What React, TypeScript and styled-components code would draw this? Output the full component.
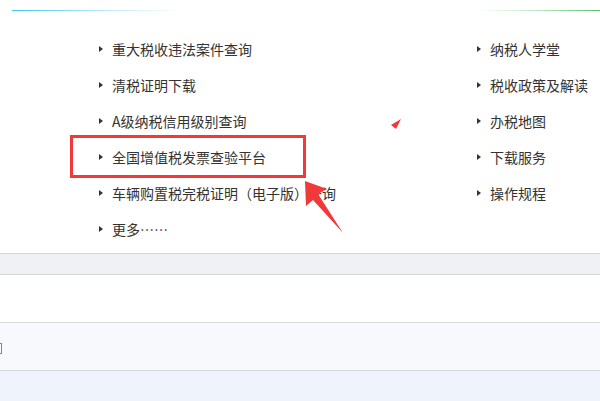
import React from 'react'
import styled, { createGlobalStyle } from 'styled-components'

const Global = createGlobalStyle`
  html, body {
    margin: 0;
    padding: 0;
    background: #fff;
  }
  body {
    font-family: "Microsoft YaHei", "Noto Sans CJK SC", "Noto Sans", sans-serif;
    overflow: hidden;
  }
`

const Page = styled.div`
  width: 600px;
  height: 401px;
  display: flex;
  flex-direction: column;
  background: #fff;
`

const Rules = styled.div`
  display: flex;
  justify-content: space-between;
  padding-top: 10px;
`

const Rule = styled.i<{ $side: 'left' | 'right' }>`
  display: block;
  height: 1px;
  width: ${p => (p.$side === 'left' ? '171px' : '125px')};
  margin-left: ${p => (p.$side === 'left' ? '12px' : '0')};
  background: ${p =>
    p.$side === 'left'
      ? 'linear-gradient(to right, #3ec6ea, rgba(62,198,234,0.35) 55%, rgba(62,198,234,0))'
      : 'linear-gradient(to left, #55c56c, rgba(85,197,108,0.35) 55%, rgba(85,197,108,0))'};
`

const Links = styled.div`
  position: relative;
  display: flex;
  justify-content: space-between;
  padding: 20px 0 6px 0;
`

const List = styled.ul<{ $indent: number }>`
  list-style: none;
  margin: 0;
  padding: 0 0 0 ${p => p.$indent}px;
  flex: ${p => (p.$indent > 50 ? '1' : '0 0 123px')};
`

const Item = styled.li`
  display: flex;
  align-items: center;
  height: 36px;
  font-size: 14px;
  color: #333;
  white-space: nowrap;
  &::before {
    content: '';
    width: 0;
    height: 0;
    border-top: 3.5px solid transparent;
    border-bottom: 3.5px solid transparent;
    border-left: 4px solid #333;
    margin-right: 9px;
  }
`

// annotation drawn over the list, in page coordinates
const Overlay = styled.svg`
  position: absolute;
  left: 0;
  top: -11px;
  pointer-events: none;
`

const Band = styled.div<{ $h: number; $bg: string }>`
  height: ${p => p.$h}px;
  flex: ${p => (p.$h === 0 ? '1' : 'none')};
  background: ${p => p.$bg};
  border-top: 1px solid #d6d8dc;
  position: relative;
`

const Cut = styled.span`
  position: absolute;
  left: -1px;
  top: 20px;
  width: 2px;
  height: 9px;
  border: 1px solid #4d8fe0;
  border-left: none;
`

const leftItems = [
  '重大税收违法案件查询',
  '清税证明下载',
  'A级纳税信用级别查询',
  '全国增值税发票查验平台',
  '车辆购置税完税证明（电子版）查询',
  '更多……',
]

const rightItems = ['纳税人学堂', '税收政策及解读', '办税地图', '下载服务', '操作规程']

export default function App() {
  return (
    <Page>
      <Global />
      <Rules>
        <Rule $side="left" />
        <Rule $side="right" />
      </Rules>
      <Links>
        <List $indent={99}>
          {leftItems.map(t => (
            <Item key={t}>{t}</Item>
          ))}
        </List>
        <List $indent={0}>
          {rightItems.map(t => (
            <Item key={t}>{t}</Item>
          ))}
        </List>
        <Overlay width="600" height="260" viewBox="0 0 600 260">
          <rect x="71.5" y="136.5" width="233" height="40" fill="none" stroke="#f23838" strokeWidth="3" />
          <polygon
            points="305,181 306,206 313,200 343,233 318,194 327,189"
            fill="#f23838"
          />
          <polygon points="391,125 401,119 396,129" fill="#f23838" />
        </Overlay>
      </Links>
      <Band $h={20} $bg="#f0f1f5" />
      <Band $h={47} $bg="#ffffff" />
      <Band $h={47} $bg="#f7f9fd">
        <Cut />
      </Band>
      <Band $h={0} $bg="#eef3fc" />
    </Page>
  )
}
